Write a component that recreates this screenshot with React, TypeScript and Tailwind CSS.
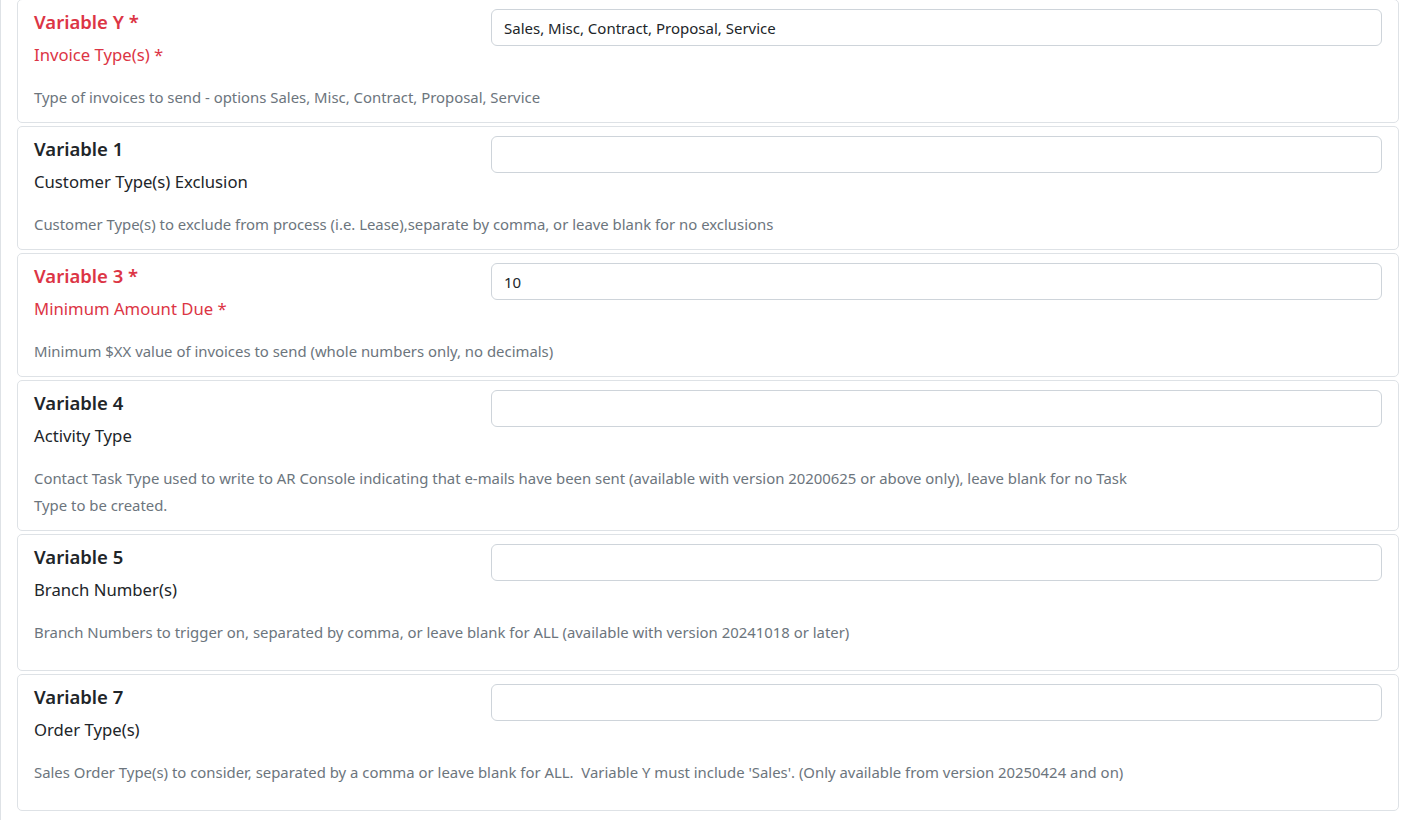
import clsx from 'clsx';

type Row = {
	title: string;
	label: string;
	required?: boolean;
	value?: string;
	desc: string;
	extra?: boolean;
};

const rows: Row[] = [
	{
		title: 'Variable Y *',
		label: 'Invoice Type(s) *',
		required: true,
		value: 'Sales, Misc, Contract, Proposal, Service',
		desc: 'Type of invoices to send - options Sales, Misc, Contract, Proposal, Service',
	},
	{
		title: 'Variable 1',
		label: 'Customer Type(s) Exclusion',
		desc: 'Customer Type(s) to exclude from process (i.e. Lease),separate by comma, or leave blank for no exclusions',
	},
	{
		title: 'Variable 3 *',
		label: 'Minimum Amount Due *',
		required: true,
		value: '10',
		desc: 'Minimum $XX value of invoices to send (whole numbers only, no decimals)',
	},
	{
		title: 'Variable 4',
		label: 'Activity Type',
		desc: 'Contact Task Type used to write to AR Console indicating that e-mails have been sent (available with version 20200625 or above only), leave blank for no Task Type to be created.',
	},
	{
		title: 'Variable 5',
		label: 'Branch Number(s)',
		desc: 'Branch Numbers to trigger on, separated by comma, or leave blank for ALL (available with version 20241018 or later)',
		extra: true,
	},
	{
		title: 'Variable 7',
		label: 'Order Type(s)',
		desc: "Sales Order Type(s) to consider, separated by a comma or leave blank for ALL.\u00a0 Variable Y must include 'Sales'. (Only available from version 20250424 and on)",
		extra: true,
	},
];

function VariableCard({ row, first }: { row: Row; first: boolean }) {
	return (
		<div
			className={clsx(
				'border border-[#dee2e6] rounded-[5px] bg-white px-[16px] pt-[9px]',
				row.extra ? 'pb-[24px]' : 'pb-[11px]',
				first ? 'mt-0' : 'mt-[3px]'
			)}
		>
			<div className="flex">
				<div className="w-[445px] shrink-0">
					<div
						className={clsx(
							'text-[18.5px] font-semibold leading-[26px]',
							row.required ? 'text-[#dc3545]' : 'text-[#212529]'
						)}
					>
						{row.title}
					</div>
					<div
						className={clsx(
							'mt-[8px] text-[16.7px] leading-[24px]',
							row.required ? 'text-[#dc3545]' : 'text-[#212529]'
						)}
					>
						{row.label}
					</div>
				</div>
				<div className="flex-1 pl-[12px]">
					<input
						type="text"
						defaultValue={row.value ?? ''}
						className="w-full h-[37px] border border-[#ced4da] rounded-[6px] px-[12px] text-[15px] text-[#212529] outline-none"
					/>
				</div>
			</div>
			<p className="mt-[17px] max-w-[1110px] text-[14.9px] leading-[27px] text-[#6c757d]">
				{row.desc}
			</p>
		</div>
	);
}

export default function App() {
	return (
		<div
			className="h-[821px] overflow-hidden bg-white border-l border-[#dee2e6] pl-[16px] pr-[14px] -mt-[1px]"
			style={{ fontFamily: '"Noto Sans", "Open Sans", sans-serif' }}
		>
			{rows.map((row, i) => (
				<VariableCard key={row.title} row={row} first={i === 0} />
			))}
		</div>
	);
}
